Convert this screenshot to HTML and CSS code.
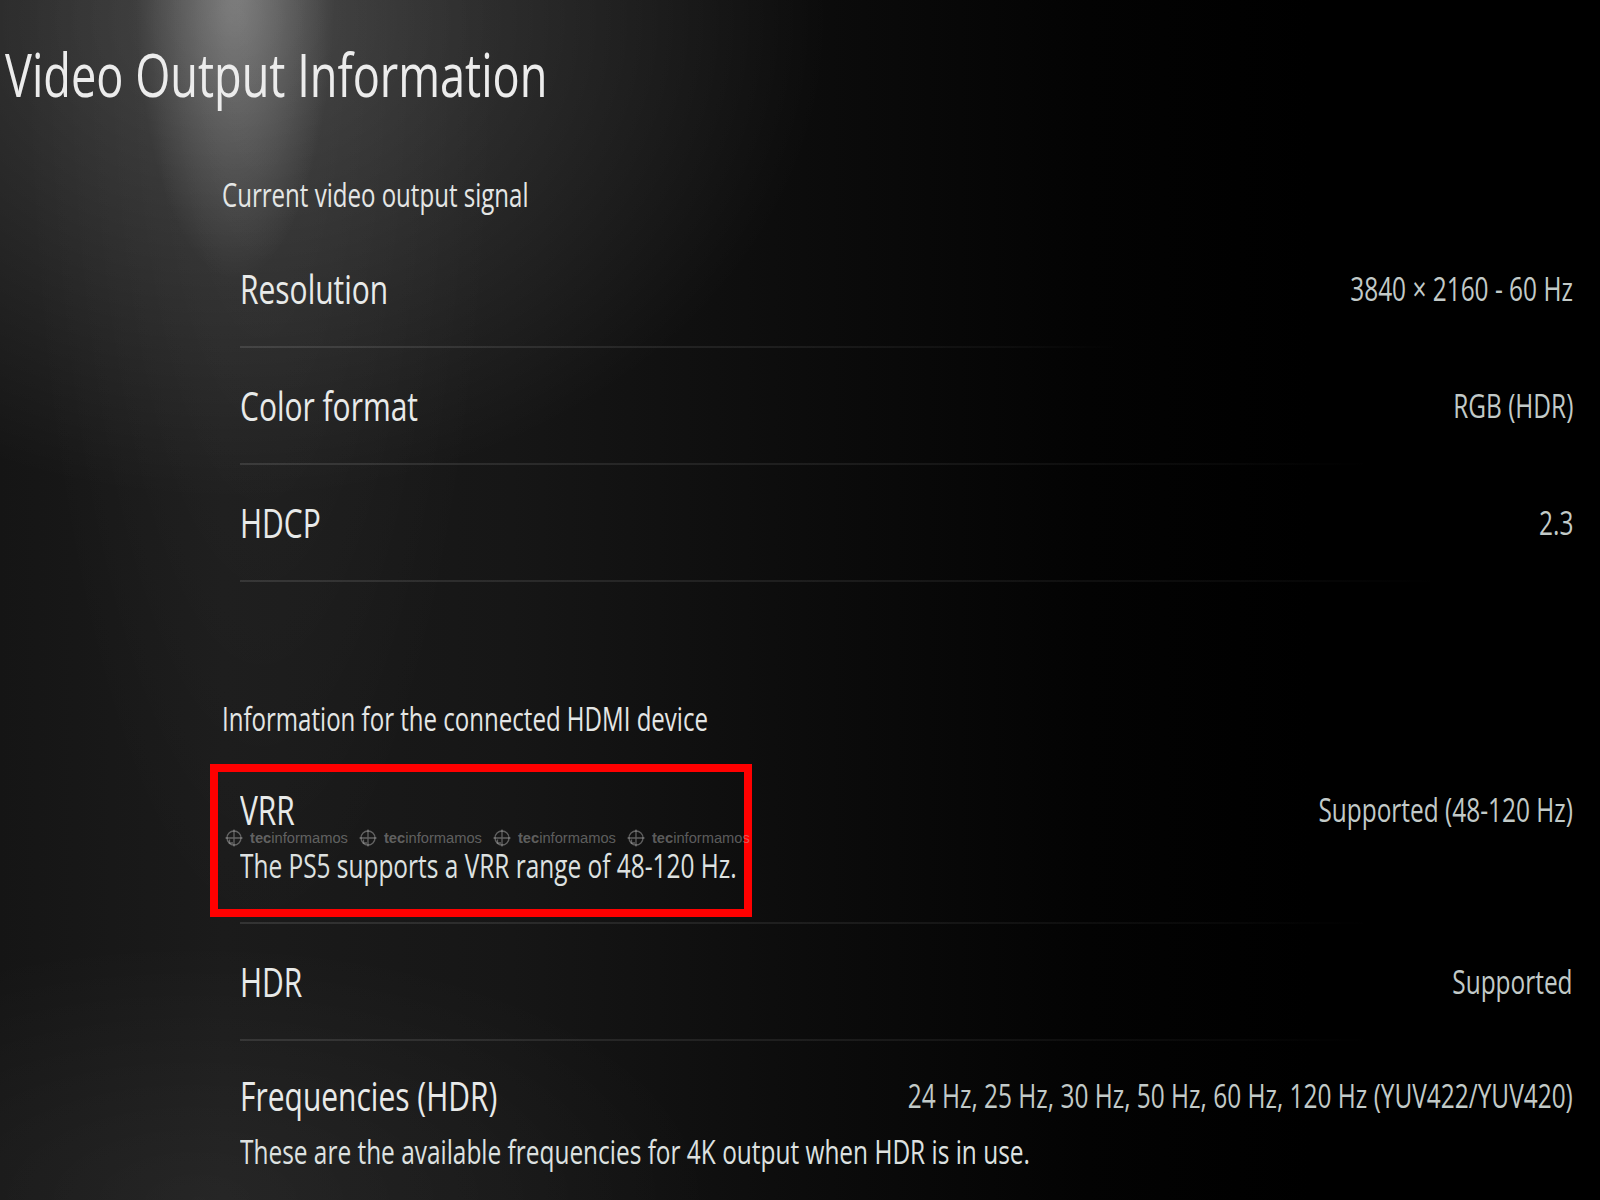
FILE: index.html
```html
<!DOCTYPE html>
<html lang="en">
<head>
<meta charset="utf-8">
<title>Video Output Information</title>
<link rel="stylesheet" href="styles.css">
</head>
<body>
<div class="screen">
  <h1 class="page-title"><span class="sx">Video Output Information</span></h1>
  <main class="content">
    <section class="group">
      <h2 class="group-title"><span class="sx">Current video output signal</span></h2>
      <div class="row row-short">
        <span class="label sx">Resolution</span>
        <span class="value sx sx-r">3840 × 2160 - 60 Hz</span>
      </div>
      <div class="row">
        <span class="label sx">Color format</span>
        <span class="value sx sx-r">RGB (HDR)</span>
      </div>
      <div class="row row-long">
        <span class="label sx">HDCP</span>
        <span class="value sx sx-r">2.3</span>
      </div>
    </section>
    <section class="group group-hdmi">
      <h2 class="group-title"><span class="sx">Information for the connected HDMI device</span></h2>
      <div class="row row-two row-vrr">
        <span class="label sx">VRR</span>
        <span class="value sx sx-r">Supported (48-120 Hz)</span>
        <span class="desc sx">The PS5 supports a VRR range of 48-120 Hz.</span>
        <div class="highlight"></div>
        <div class="watermark">
          <span class="wm-item"><svg class="wm-icon" viewBox="0 0 18 18"><circle cx="9" cy="9" r="7"/><path d="M0.5 9H17.5M9 0.5V17.5M4.5 10.5V14H8"/></svg><span class="wm-text"><b>tec</b>informamos</span></span>
          <span class="wm-item"><svg class="wm-icon" viewBox="0 0 18 18"><circle cx="9" cy="9" r="7"/><path d="M0.5 9H17.5M9 0.5V17.5M4.5 10.5V14H8"/></svg><span class="wm-text"><b>tec</b>informamos</span></span>
          <span class="wm-item"><svg class="wm-icon" viewBox="0 0 18 18"><circle cx="9" cy="9" r="7"/><path d="M0.5 9H17.5M9 0.5V17.5M4.5 10.5V14H8"/></svg><span class="wm-text"><b>tec</b>informamos</span></span>
          <span class="wm-item"><svg class="wm-icon" viewBox="0 0 18 18"><circle cx="9" cy="9" r="7"/><path d="M0.5 9H17.5M9 0.5V17.5M4.5 10.5V14H8"/></svg><span class="wm-text"><b>tec</b>informamos</span></span>
        </div>
      </div>
      <div class="row">
        <span class="label sx">HDR</span>
        <span class="value sx sx-r">Supported</span>
      </div>
      <div class="row row-two">
        <span class="label sx">Frequencies (HDR)</span>
        <span class="value sx sx-r">24 Hz, 25 Hz, 30 Hz, 50 Hz, 60 Hz, 120 Hz (YUV422/YUV420)</span>
        <span class="desc sx">These are the available frequencies for 4K output when HDR is in use.</span>
      </div>
    </section>
  </main>
</div>
</body>
</html>
```

FILE: styles.css
```css
html, body {
  margin: 0;
  padding: 0;
  background: #000;
}

.screen {
  width: 1600px;
  height: 1200px;
  overflow: hidden;
  font-family: "Open Sans", "Noto Sans", sans-serif;
  color: #e6e8e7;
  background:
    radial-gradient(ellipse 100px 300px at 235px -20px, rgba(255,255,255,0.30), rgba(255,255,255,0)),
    radial-gradient(ellipse 600px 480px at 230px 20px, rgba(255,255,255,0.17), rgba(255,255,255,0)),
    radial-gradient(ellipse 240px 950px at 260px 0px, rgba(255,255,255,0.05), rgba(255,255,255,0)),
    radial-gradient(ellipse 520px 260px at 200px 1200px, rgba(255,255,255,0.05), rgba(255,255,255,0)),
    linear-gradient(to right, #151515 0%, #1b1b1b 14%, #161616 32%, #0b0b0b 52%, #030303 68%, #000 82%);
}

.sx {
  display: inline-block;
  white-space: nowrap;
  transform: scaleX(0.74);
  transform-origin: left center;
}

.sx-r {
  transform-origin: right center;
}

.page-title {
  margin: 0;
  padding: 32px 0 0 5px;
  font-size: 61px;
  font-weight: 400;
  line-height: 83px;
  height: 83px;
  color: #ececec;
}

.content {
  padding: 0 27px 0 222px;
}

.group {
  margin-top: 43px;
}

.group-hdmi {
  margin-top: 100px;
}

.group-title {
  margin: 0;
  height: 73px;
  display: flex;
  align-items: center;
  font-size: 32.5px;
  font-weight: 400;
  line-height: 44px;
  color: #e4e6e5;
}

.row {
  position: relative;
  margin-left: 18px;
  height: 115px;
  display: flex;
  align-items: center;
  justify-content: space-between;
  border-bottom: 2px solid transparent;
  border-image: linear-gradient(to right, rgba(255,255,255,0.11) 0%, rgba(255,255,255,0.07) 45%, rgba(255,255,255,0.03) 72%, rgba(255,255,255,0) 85%) 1;
}

.row-short {
  border-image: linear-gradient(to right, rgba(255,255,255,0.11) 0%, rgba(255,255,255,0.07) 40%, rgba(255,255,255,0.03) 58%, rgba(255,255,255,0) 66%) 1;
}

.row-long {
  border-image: linear-gradient(to right, rgba(255,255,255,0.11) 0%, rgba(255,255,255,0.07) 45%, rgba(255,255,255,0.03) 78%, rgba(255,255,255,0) 90%) 1;
}

.row-two {
  height: auto;
  display: grid;
  grid-template-columns: 1fr auto;
  align-items: center;
  row-gap: 21px;
  padding: 37px 0 39px;
}

.label {
  font-size: 40.5px;
  line-height: 48px;
  color: #e8eae9;
}

.row-two .label,
.row-two .value {
  line-height: 36px;
}

.value {
  font-size: 33px;
  line-height: 48px;
  color: #c2cac8;
  justify-self: end;
}

.desc {
  grid-column: 1 / -1;
  font-size: 33px;
  line-height: 34px;
  color: #dde1e0;
}

.highlight {
  position: absolute;
  left: -30px;
  top: 9px;
  width: 542px;
  height: 153px;
  box-sizing: border-box;
  border: 8px solid #ff0000;
  z-index: 1;
}

.watermark {
  position: absolute;
  left: -15px;
  top: 74px;
  height: 18px;
  display: flex;
  gap: 11px;
  z-index: 2;
  font-family: "Liberation Sans", Arial, sans-serif;
  font-size: 14.7px;
  line-height: 18px;
  color: rgba(200,200,200,0.42);
  white-space: nowrap;
}

.wm-item {
  display: flex;
  align-items: center;
  gap: 7px;
}

.wm-icon {
  width: 18px;
  height: 18px;
  fill: none;
  stroke: rgba(200,200,200,0.42);
  stroke-width: 1.3;
}

.wm-text b {
  font-weight: 700;
}
```
